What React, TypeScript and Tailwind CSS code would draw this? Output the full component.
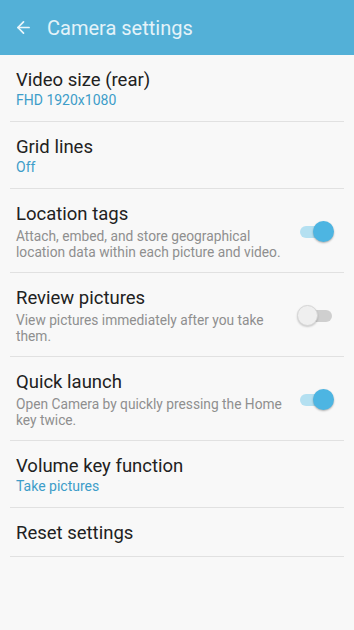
import { ArrowLeft } from 'lucide-react';

type Item = {
  title: string;
  value?: string;
  desc?: string;
  toggle?: boolean;
};

const items: Item[] = [
  { title: 'Video size (rear)', value: 'FHD 1920x1080' },
  { title: 'Grid lines', value: 'Off' },
  {
    title: 'Location tags',
    desc: 'Attach, embed, and store geographical location data within each picture and video.',
    toggle: true,
  },
  {
    title: 'Review pictures',
    desc: 'View pictures immediately after you take them.',
    toggle: false,
  },
  {
    title: 'Quick launch',
    desc: 'Open Camera by quickly pressing the Home key twice.',
    toggle: true,
  },
  { title: 'Volume key function', value: 'Take pictures' },
  { title: 'Reset settings' },
];

const Toggle = ({ on }: { on: boolean }) => (
  <div className="relative w-[40px] h-[22px] flex items-center">
    <div
      className={`absolute left-[4px] right-[4px] h-[12px] rounded-full ${
        on ? 'bg-[#b4e0f1]' : 'bg-[#cfcfcf]'
      }`}
    />
    {on ? (
      <div className="absolute right-[2px] w-[21px] h-[21px] rounded-full bg-[#4db5e2] shadow-[0_1px_2px_rgba(0,0,0,0.3)]" />
    ) : (
      <div className="absolute left-[1px] w-[21px] h-[21px] rounded-full bg-[#efefef] border border-[#d6d6d6] shadow-[0_1px_2px_rgba(0,0,0,0.2)]" />
    )}
  </div>
);

export default function App() {
  return (
    <div
      className="w-[354px] h-[630px] bg-[#f8f8f8] overflow-hidden"
      style={{ fontFamily: 'Roboto, "Noto Sans", sans-serif' }}
    >
      <header className="h-[55px] bg-[#53b0d7] flex items-center">
        <ArrowLeft className="ml-[14px] text-[#eaf6fb]" size={19} strokeWidth={2.2} />
        <h1 className="ml-[14px] text-[20px] text-[#e4f3f9] leading-none">Camera settings</h1>
      </header>

      <div className="mx-[10px]">
        {items.map((item) => (
          <div
            key={item.title}
            className="flex items-center border-b border-[#e1e1e1] pl-[6px] pr-[8px] pt-[14px] pb-[12px]"
          >
            <div className="flex-1 min-w-0">
              <div className="text-[18.5px] leading-[22px] text-[#212121]">{item.title}</div>
              {item.value && (
                <div className="text-[14px] leading-[18px] text-[#3d9dc9]">{item.value}</div>
              )}
              {item.desc && (
                <div className="text-[13.75px] leading-[16px] text-[#8f8f8f] mt-[3px] pr-[10px]">
                  {item.desc}
                </div>
              )}
            </div>
            {item.toggle !== undefined && <Toggle on={item.toggle} />}
          </div>
        ))}
      </div>
    </div>
  );
}
